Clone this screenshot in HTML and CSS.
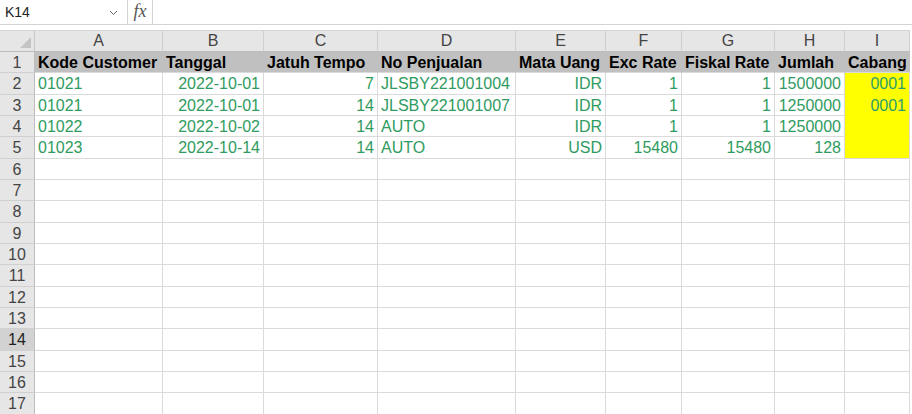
FILE: index.html
```html
<!DOCTYPE html>
<html lang="id">
<head>
<meta charset="UTF-8" />
<title>Penjualan</title>
<link rel="stylesheet" href="styles.css">
</head>
<body>

<div class="formula-bar">
  <div class="name-box">
    <span>K14</span>
    <svg class="chevron" width="9" height="6" viewBox="0 0 9 6"><path d="M1 1 L4.5 4.5 L8 1" fill="none" stroke="#666" stroke-width="1"/></svg>
  </div>
  <div class="fx">fx</div>
  <div class="formula-input"></div>
</div>

<div class="sheet">
  <!-- kolom header -->
  <div class="corner"><span class="corner-tri"></span></div>
  <div class="col-head">A</div>
  <div class="col-head">B</div>
  <div class="col-head">C</div>
  <div class="col-head">D</div>
  <div class="col-head">E</div>
  <div class="col-head">F</div>
  <div class="col-head">G</div>
  <div class="col-head">H</div>
  <div class="col-head">I</div>

  <!-- baris 1 -->
  <div class="row-head">1</div>
  <div class="cell title">Kode Customer</div>
  <div class="cell title">Tanggal</div>
  <div class="cell title">Jatuh Tempo</div>
  <div class="cell title">No Penjualan</div>
  <div class="cell title">Mata Uang</div>
  <div class="cell title">Exc Rate</div>
  <div class="cell title">Fiskal Rate</div>
  <div class="cell title">Jumlah</div>
  <div class="cell title">Cabang</div>

  <div class="row-head">2</div>
  <div class="cell">01021</div>
  <div class="cell num">2022-10-01</div>
  <div class="cell num">7</div>
  <div class="cell">JLSBY221001004</div>
  <div class="cell num">IDR</div>
  <div class="cell num">1</div>
  <div class="cell num">1</div>
  <div class="cell num">1500000</div>
  <div class="cell num yellow">0001</div>

  <div class="row-head">3</div>
  <div class="cell">01021</div>
  <div class="cell num">2022-10-01</div>
  <div class="cell num">14</div>
  <div class="cell">JLSBY221001007</div>
  <div class="cell num">IDR</div>
  <div class="cell num">1</div>
  <div class="cell num">1</div>
  <div class="cell num">1250000</div>
  <div class="cell num yellow">0001</div>

  <div class="row-head">4</div>
  <div class="cell">01022</div>
  <div class="cell num">2022-10-02</div>
  <div class="cell num">14</div>
  <div class="cell">AUTO</div>
  <div class="cell num">IDR</div>
  <div class="cell num">1</div>
  <div class="cell num">1</div>
  <div class="cell num">1250000</div>
  <div class="cell num yellow"></div>

  <div class="row-head">5</div>
  <div class="cell">01023</div>
  <div class="cell num">2022-10-14</div>
  <div class="cell num">14</div>
  <div class="cell">AUTO</div>
  <div class="cell num">USD</div>
  <div class="cell num">15480</div>
  <div class="cell num">15480</div>
  <div class="cell num">128</div>
  <div class="cell num yellow last"></div>
</div>

<script>
  // baris kosong 6 - 17
  const sheet = document.querySelector('.sheet');
  for (let r = 6; r <= 17; r++) {
    const head = document.createElement('div');
    head.className = 'row-head' + (r === 14 ? ' active' : '');
    head.textContent = r;
    sheet.appendChild(head);
    for (let c = 0; c < 9; c++) {
      const cell = document.createElement('div');
      cell.className = 'cell';
      sheet.appendChild(cell);
    }
  }
</script>

</body>
</html>
```

FILE: styles.css
```css
body {
  margin: 0;
  background: #fff;
  font-family: "Liberation Sans", Arial, sans-serif;
  overflow: hidden;
}
.formula-bar {
  display: flex;
  height: 24px;
  border-bottom: 1px solid #d4d4d4;
}
.name-box {
  width: 127px;
  display: flex;
  align-items: center;
  justify-content: space-between;
  padding: 0 9px 0 5px;
  box-sizing: border-box;
  font-size: 14px;
  color: #222;
}
.chevron {
  margin-top: 1px;
}
.fx {
  width: 26px;
  box-sizing: border-box;
  border-left: 1px solid #d4d4d4;
  border-right: 1px solid #d4d4d4;
  font-family: "Liberation Serif", "Times New Roman", serif;
  font-style: italic;
  font-size: 18px;
  color: #555;
  text-align: center;
  line-height: 22px;
}
.formula-input {
  flex: 1;
}
.sheet {
  margin-top: 5px;
  display: grid;
  grid-template-columns: 35px 128px 101px 114px 138px 90px 76px 93px 70px 65px;
  grid-template-rows: 21px;
  grid-auto-rows: 21.33px;
  width: 910px;
  border-top: 1px solid #d4d4d4;
}
.corner, .col-head, .row-head {
  background: #e6e6e6;
  color: #444;
  font-size: 16px;
  box-sizing: border-box;
}
.corner {
  position: relative;
  border-right: 1px solid #c6c6c6;
  border-bottom: 1px solid #bdbdbd;
}
.corner-tri {
  position: absolute;
  right: 3px;
  bottom: 3px;
  width: 0;
  height: 0;
  border-left: 11px solid transparent;
  border-bottom: 11px solid #c4c4c4;
}
.col-head {
  text-align: center;
  line-height: 20px;
  border-right: 1px solid #cfcfcf;
  border-bottom: 1px solid #bdbdbd;
}
.row-head {
  text-align: center;
  line-height: 21px;
  border-right: 1px solid #bdbdbd;
  border-bottom: 1px solid #d0d0d0;
}
.row-head.active {
  background: #d2d2d2;
  color: #222;
}
.cell {
  box-sizing: border-box;
  border-right: 1px solid #dadada;
  border-bottom: 1px solid #dadada;
  padding: 0 3px;
  font-size: 16px;
  line-height: 21px;
  color: #2f9b60;
  white-space: nowrap;
  overflow: hidden;
}
.cell.num {
  text-align: right;
}
.cell.title {
  background: #c0c0c0;
  border-right-color: #c0c0c0;
  color: #000;
  font-weight: 700;
}
.cell.yellow {
  background: #ffff00;
  border-bottom-color: #ffff00;
  color: #2f9e6c;
}
.cell.yellow.last {
  border-bottom-color: #dadada;
}
```
